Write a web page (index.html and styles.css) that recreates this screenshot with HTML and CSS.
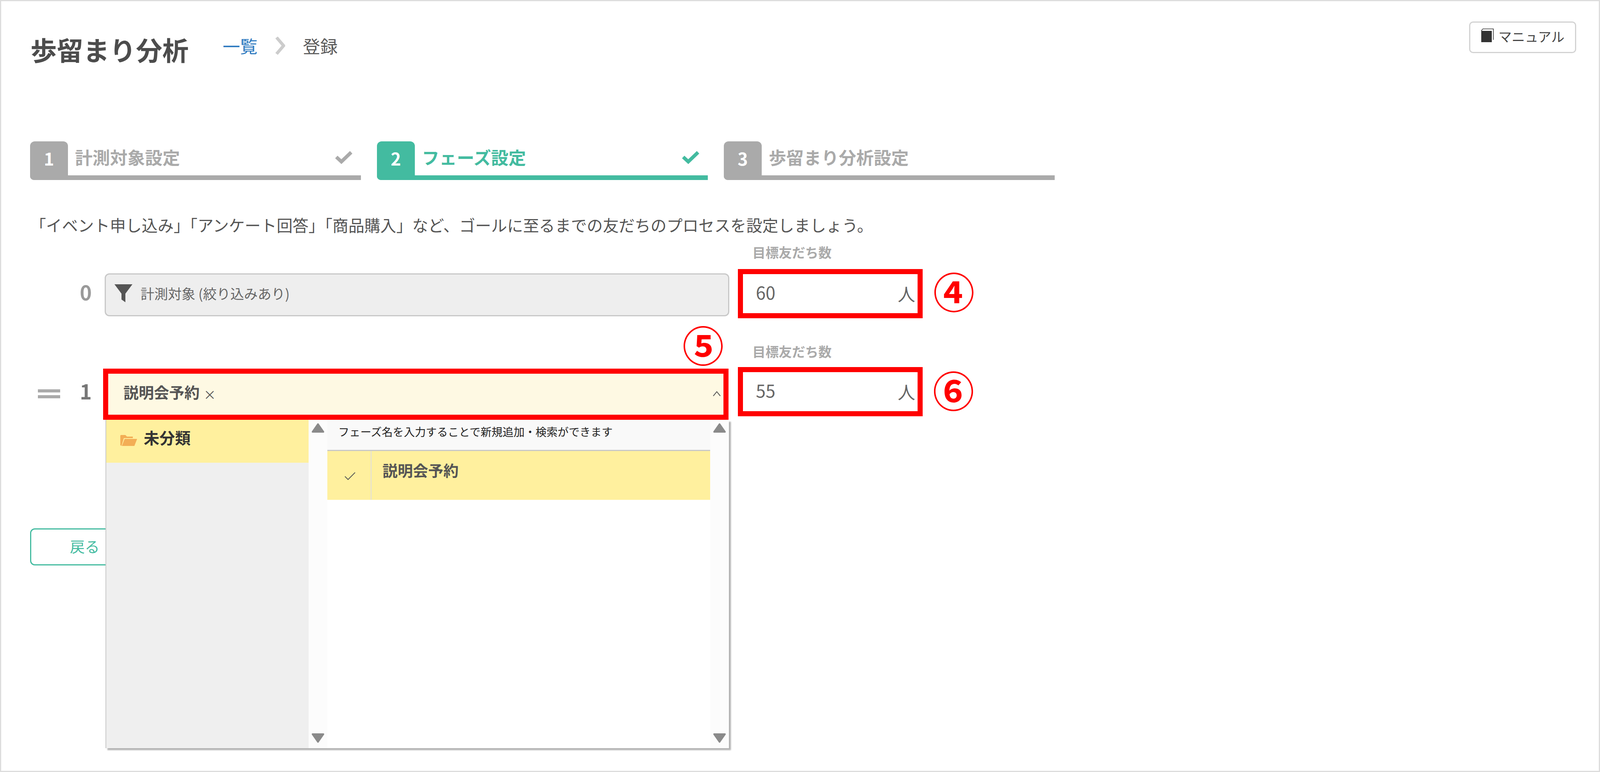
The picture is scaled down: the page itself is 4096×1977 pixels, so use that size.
FILE: index.html
```html
<!DOCTYPE html>
<html lang="ja">
<head>
<meta charset="utf-8">
<title>歩留まり分析</title>
<link rel="stylesheet" href="styles.css">
</head>
<body>
<div class="page">
  <header class="header">
    <h1 class="title">歩留まり分析</h1>
    <nav class="crumbs">
      <a class="crumb-link">一覧</a>
      <svg class="crumb-sep" viewBox="0 0 26 46"><path d="M4 2 L22 23 L4 44" fill="none" stroke="#cccccc" stroke-width="8"/></svg>
      <span class="crumb-current">登録</span>
    </nav>
    <button class="manual">
      <svg class="manual-icon" viewBox="0 0 33 36"><path d="M5 2 H32 V30 M5 2 L1 7" fill="none" stroke="#333" stroke-width="1.6"/><path d="M1 7 H28 V36 H1 Z" fill="#333"/></svg>
      <span class="manual-text">マニュアル</span>
    </button>
  </header>

  <div class="steps">
    <div class="step step-done">
      <span class="step-num">1</span><span class="step-name">計測対象設定</span>
      <svg class="step-check" viewBox="0 0 46 36"><path d="M4 18 L17 30 L42 6" fill="none" stroke="currentColor" stroke-width="9"/></svg>
    </div>
    <div class="step step-active">
      <span class="step-num">2</span><span class="step-name">フェーズ設定</span>
      <svg class="step-check" viewBox="0 0 46 36"><path d="M4 18 L17 30 L42 6" fill="none" stroke="currentColor" stroke-width="9"/></svg>
    </div>
    <div class="step step-done">
      <span class="step-num">3</span><span class="step-name">歩留まり分析設定</span>
    </div>
  </div>

  <p class="lead">「イベント申し込み」「アンケート回答」「商品購入」など、ゴールに至るまでの友だちのプロセスを設定しましょう。</p>

  <div class="phase-row phase-first">
    <div class="handle-cell"></div>
    <div class="num-cell num-zero">0</div>
    <div class="field-static">
      <svg class="filter-icon" viewBox="0 0 46 46"><path d="M0 0 H46 L28 24 V46 L18 39 V24 Z" fill="#555"/></svg>
      <span class="field-text">計測対象 (絞り込みあり)</span>
    </div>
    <div class="target">
      <div class="target-label">目標友だち数</div>
      <div class="target-input"><span class="value">60</span><span class="unit">人</span><span class="mark mark-four">④</span></div>
    </div>
  </div>

  <div class="phase-row phase-second">
    <div class="handle-cell"><span class="handle"></span></div>
    <div class="num-cell num-one">1</div>
    <div class="select-wrap">
      <span class="mark mark-select">⑤</span>
      <div class="select">
        <span class="tag">説明会予約</span><span class="tag-x">×</span>
        <svg class="caret" viewBox="0 0 22 14"><path d="M2 13 L11 2 L20 13" fill="none" stroke="#555" stroke-width="2"/></svg>
      </div>
      <div class="panel">
        <div class="panel-left">
          <div class="cat-item">
            <svg class="folder" viewBox="0 0 43 30"><path d="M3 30 L0 28 V4 Q0 2 2 2 H13 L17 6 H32 V10 H9 Z" fill="#f3ae55"/><path d="M11 12 H43 L36 30 H4 Z" fill="#f3ae55"/></svg>
            <span class="cat-name">未分類</span>
          </div>
        </div>
        <div class="scroll">
          <svg class="arrow" viewBox="0 0 34 26"><path d="M17 3 L31 23 H3 Z" fill="#8a8a8a" stroke="#8a8a8a" stroke-width="4" stroke-linejoin="round"/></svg>
          <svg class="arrow" viewBox="0 0 34 26"><path d="M3 3 H31 L17 23 Z" fill="#8a8a8a" stroke="#8a8a8a" stroke-width="4" stroke-linejoin="round"/></svg>
        </div>
        <div class="panel-main">
          <div class="hint">フェーズ名を入力することで新規追加・検索ができます</div>
          <div class="option">
            <div class="option-check"><svg viewBox="0 0 30 22"><path d="M2 12 L10 20 L28 2" fill="none" stroke="#555" stroke-width="2"/></svg></div>
            <div class="option-name">説明会予約</div>
          </div>
        </div>
        <div class="scroll scroll-right">
          <svg class="arrow" viewBox="0 0 34 26"><path d="M17 3 L31 23 H3 Z" fill="#8a8a8a" stroke="#8a8a8a" stroke-width="4" stroke-linejoin="round"/></svg>
          <svg class="arrow" viewBox="0 0 34 26"><path d="M3 3 H31 L17 23 Z" fill="#8a8a8a" stroke="#8a8a8a" stroke-width="4" stroke-linejoin="round"/></svg>
        </div>
      </div>
    </div>
    <div class="target">
      <div class="target-label">目標友だち数</div>
      <div class="target-input"><span class="value">55</span><span class="unit">人</span><span class="mark mark-six">⑥</span></div>
    </div>
  </div>

  <button class="back">戻る</button>
</div>
</body>
</html>
```
FILE: styles.css
```css
* { box-sizing: border-box; }
html, body { margin: 0; padding: 0; background: #fff; }
body { font-family: "Noto Sans CJK JP", "Noto Sans", sans-serif; color: #555; overflow: hidden; }

.page {
  width: 4096px;
  height: 1977px;
  border: 3px solid #dddddd;
  padding: 52px 58px 0 74px;
}

/* header */
.header { display: flex; align-items: flex-start; height: 307px; }
.title { margin: 21px 0 0 1px; font-size: 67.5px; line-height: 100px; font-weight: 700; color: #4c4c4c; }
.crumbs { display: flex; align-items: center; margin: 32px 0 0 87px; height: 60px; font-size: 44.6px; line-height: 60px; }
.crumb-link { color: #2e7ac0; }
.crumb-sep { width: 26px; height: 46px; margin: 0 45px; }
.crumb-current { color: #5a5a5a; }
.manual {
  margin-left: auto; width: 274px; height: 81px;
  display: flex; align-items: center; justify-content: center; gap: 12px;
  background: #fff; border: 3px solid #d2d2d2; border-radius: 10px;
  font: 400 34px/1 "Noto Sans CJK JP", sans-serif; color: #444;
}
.manual-icon { width: 33px; height: 36px; margin-bottom: 12px; }
.manual-text { margin-bottom: 6px; }

/* steps */
.steps { display: flex; gap: 41px; }
.step { position: relative; display: flex; width: 847px; height: 99px; border-bottom: 12.5px solid #aaaaaa; border-bottom-left-radius: 10px; color: #aaaaaa; }
.step-active { color: #43bba0; border-bottom-color: #43bba0; }
.step-num {
  width: 97px; height: 99px; flex: none; margin-bottom: -12.5px;
  background: currentColor; border-radius: 12px 12px 0 10px;
  display: flex; align-items: center; justify-content: center; padding-bottom: 12px;
  font-size: 44.6px; font-weight: 700; line-height: 1;
  -webkit-text-fill-color: #fff;
}
.step-name { margin-left: 18px; font-size: 44.8px; line-height: 80px; font-weight: 700; }
.step-check { margin: 22px 21px 0 auto; width: 46px; height: 36px; }

.lead { margin: 85px 0 0; font-size: 40.85px; line-height: 60px; color: #555; }

/* phases */
.phase-row { display: grid; grid-template-columns: 57px 110px 1625px 473px; align-items: end; margin-left: 20px; }
.phase-first { margin-top: 23px; }
.phase-second { margin-top: 68px; }
.handle-cell, .num-cell { height: 126px; display: flex; align-items: center; }
.handle { display: block; width: 57px; height: 23px; border-top: 8px solid #aaaaaa; border-bottom: 8px solid #aaaaaa; margin-top: 10px; }
.num-cell { justify-content: flex-end; padding-right: 29px; font-size: 52px; font-weight: 700; color: #777; }
.num-zero { color: #9a9a9a; padding-bottom: 11px; }
.num-one { padding-bottom: 5px; }

.field-static {
  width: 1599px; height: 110px; margin: 0 0 5px 4px;
  display: flex; align-items: center; gap: 23px; padding: 0 0 0 22px;
  background: #eeeeee; border: 3px solid #c8c8c8; border-radius: 12px;
  font-size: 35px; color: #666;
}
.filter-icon { width: 46px; height: 46px; flex: none; margin-bottom: 8px; }
.field-text { margin-bottom: 10px; margin-left: -2px; }

.select-wrap { position: relative; width: 1601px; margin-bottom: -9px; }
.select {
  height: 131px; display: flex; align-items: center;
  padding: 0 6px 0 39px; border: 13px solid #ff0000; background: #fef9e3;
}
.tag { font-size: 39px; font-weight: 700; color: #555; margin-bottom: 14px; }
.tag-x { margin-left: 10px; font-size: 32px; color: #555; margin-bottom: 2px; }
.caret { width: 22px; height: 14px; margin: 0 0 3px auto; }

.panel {
  position: absolute; z-index: 2; left: 6px; top: 100%; width: 1596px; height: 841px;
  display: flex; background: #fff;
  border-left: 2px solid #c8c8c8;
  box-shadow: 5px 5px 3px rgba(0,0,0,.3);
}
.panel-left { width: 518px; flex: none; background: #efefef; }
.cat-item { height: 110px; background: #fff09e; display: flex; align-items: flex-start; padding: 34px 0 0 36px; gap: 17px; font-size: 40px; line-height: 56px; font-weight: 700; color: #333; }
.cat-name { margin-top: -17px; }
.folder { width: 43px; height: 30px; margin-top: 3px; }
.scroll { width: 48px; flex: none; background: #fcfcfc; display: flex; flex-direction: column; justify-content: space-between; align-items: center; padding: 8px 0 13px; }
.scroll-right { width: 48px; }
.arrow { width: 34px; height: 26px; }
.panel-main { flex: 1; min-width: 0; }
.hint { height: 80px; padding: 0 0 0 28px; background: #f9f9f9; border-bottom: 3px solid #c8c8c8; font-size: 28.2px; line-height: 60px; color: #222; }
.option { display: flex; height: 125px; background: #fff09e; }
.option-check { width: 113px; flex: none; border-right: 2px solid #dedede; display: flex; align-items: center; justify-content: center; padding: 0 0 4px 5px; }
.option-check svg { width: 30px; height: 22px; margin-top: 6px; }
.option-name { margin-left: 28px; padding-top: 20px; font-size: 39px; line-height: 56px; font-weight: 700; color: #555; }

/* targets */
.target-label { height: 33px; font-size: 33.8px; line-height: 33px; font-weight: 700; color: #aaaaaa; padding-left: 37px; }
.phase-first .target-label { margin-bottom: 27px; }
.phase-second .target-label { margin-bottom: 24px; }
.target-input {
  position: relative; width: 473px; height: 126px;
  display: flex; align-items: center; justify-content: space-between;
  padding: 0 6px 0 33px; border: 13px solid #ff0000; background: #fff;
  font-size: 45px; color: #666;
}
.value { margin-bottom: 9px; }
.unit { font-size: 45px; margin-bottom: 2px; }
.mark { position: absolute; font-size: 106px; line-height: 108px; font-weight: 700; color: #ff0000; }
.mark-four { left: 487px; top: -13px; }
.mark-six { left: 486px; top: -11px; }
.mark-select { left: 1483px; top: -118px; z-index: 1; }

.back {
  display: block; width: 280px; height: 95px; margin-top: 287px;
  background: #fff; border: 3px solid #43bba0; border-radius: 12px;
  font: 400 38px/1 "Noto Sans CJK JP", sans-serif; color: #43bba0; padding-bottom: 6px;
}
```
